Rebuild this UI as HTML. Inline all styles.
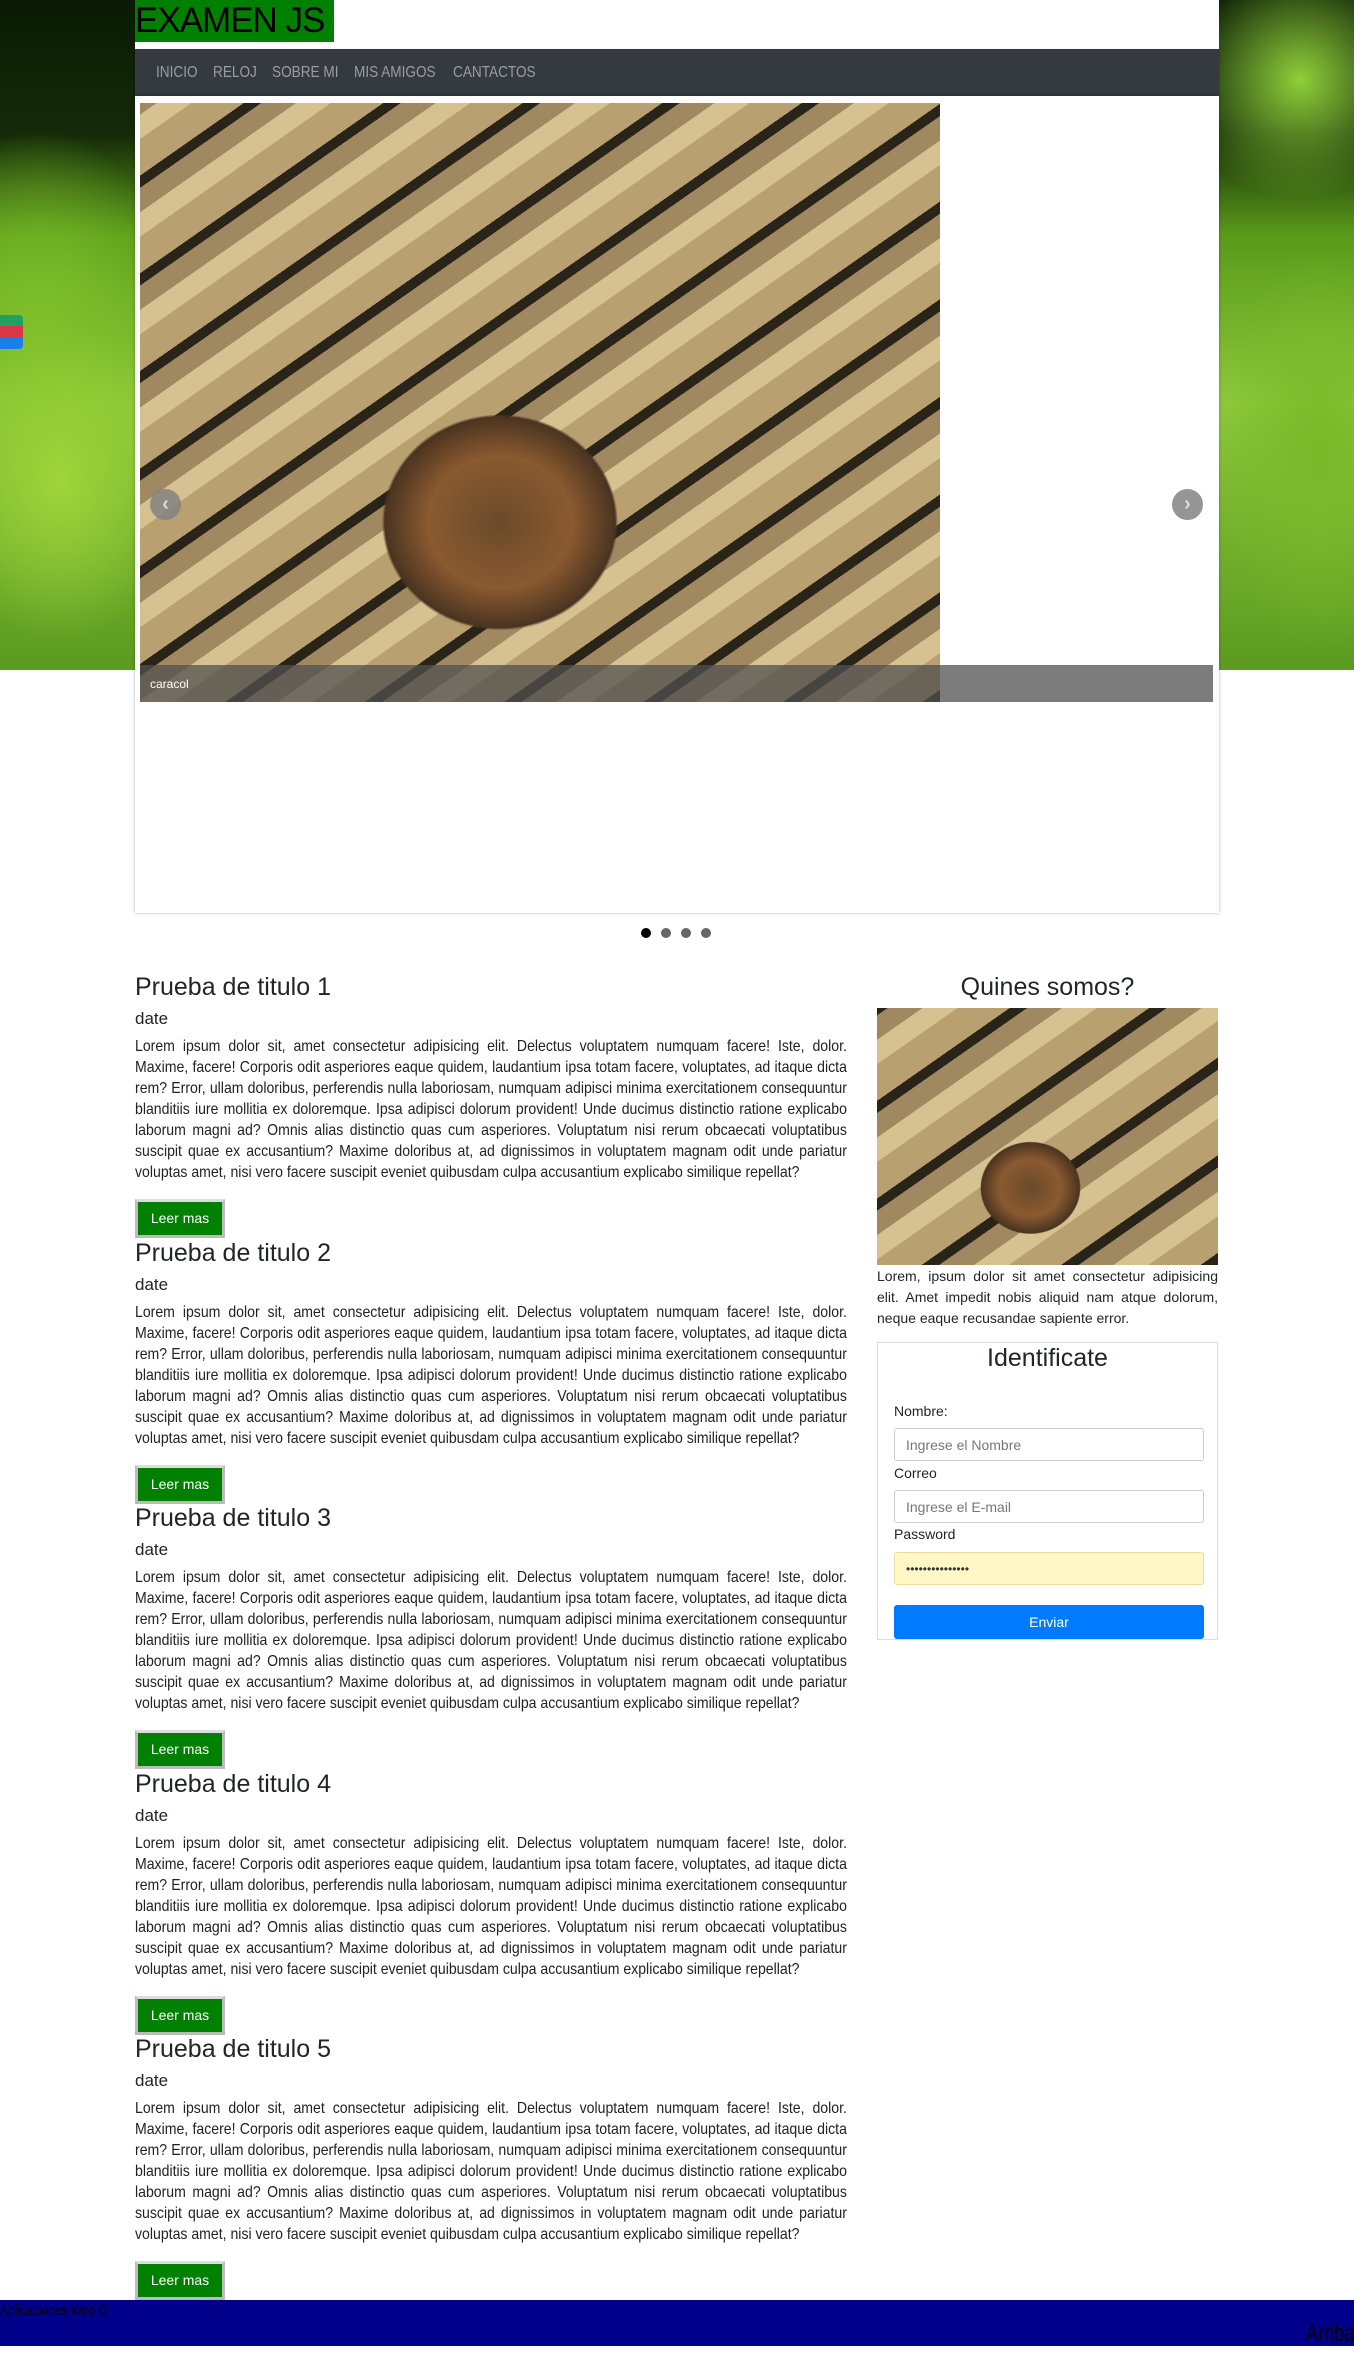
<!DOCTYPE html>
<html><head><meta charset="utf-8">
<style>
*{box-sizing:border-box;margin:0;padding:0}
body{width:1354px;height:2353px;position:relative;background:#fff;font-family:"Liberation Sans",sans-serif;color:#212529;overflow:hidden}
.bg{position:absolute;left:0;top:0;width:1354px;height:670px;background:
radial-gradient(ellipse 120px 160px at 60px 480px,#9fd43a,transparent),
radial-gradient(ellipse 140px 200px at 40px 330px,#7fc02a,transparent),
radial-gradient(ellipse 120px 120px at 1300px 80px,#8fcf3a,transparent),
radial-gradient(ellipse 100px 200px at 1320px 450px,#7ab82a,transparent),
linear-gradient(180deg,#0a1a05 0,#142a08 20%,#5a9a1a 35%,#8cc83a 60%,#5c9a20 100%)}
.mark{position:absolute;left:0;top:315px;width:23px;height:34px;border-radius:0 4px 4px 0;background:linear-gradient(#22a060 0 33%,#dc3545 33% 66%,#1a7fe8 66%)}
.title{position:absolute;left:135px;top:0;height:42px;width:199px;background:#008000;font-size:35px;line-height:42px;color:#000;letter-spacing:-1px}
.white{position:absolute;left:334px;top:0;width:885px;height:49px;background:#fff}
.whiteL{position:absolute;left:135px;top:42px;width:200px;height:7px;background:#fff}
nav{position:absolute;left:135px;top:49px;width:1084px;height:47px;background:#343a40;box-shadow:0 2px 3px rgba(0,0,0,.3)}
nav span{position:absolute;top:15px;font-size:16px;color:#9a9da0;transform:scaleX(.85);transform-origin:left}
.car{position:absolute;left:135px;top:96px;width:1084px;height:817px;background:#fff;box-shadow:0 0 3px rgba(0,0,0,.3)}
.snail{position:absolute;overflow:hidden;background:
radial-gradient(ellipse 18% 22% at 45% 70%,#6a4a2a 0,#8a5a30 50%,#4a3420 80%,transparent 82%),
repeating-linear-gradient(-35deg,#2a2418 0 10px,#b8a070 10px 40px,#d6c290 40px 60px,#a08860 60px 80px);}
.cap{position:absolute;left:140px;top:665px;width:1073px;height:37px;background:rgba(80,80,80,.75);color:#fff;font-size:12px;padding:12px 10px}
.arr{position:absolute;width:31px;height:31px;border-radius:50%;background:rgba(130,130,130,.85);color:#ddd;font-size:20px;text-align:center;line-height:30px;font-weight:bold}
.dot{position:absolute;top:928px;width:10px;height:10px;border-radius:50%;background:#666}
.art{position:absolute;left:135px;width:712px}
.art h2{font-size:25px;font-weight:normal;line-height:30px}
.art h4{font-size:17px;font-weight:normal;margin-top:6px;line-height:22px}
.art p{font-size:16px;line-height:21px;text-align:justify;margin-top:6px;color:#222;width:809px;transform:scaleX(.88);transform-origin:left top}
.btn{position:absolute;left:0;width:90px;height:39px;background:#008000;color:#fff;border:3px solid #bbb;border-top-color:#ddd;font-size:14px;text-align:center;line-height:33px}
.side{position:absolute;left:877px;width:341px}
.form{position:absolute;left:877px;top:1342px;width:341px;height:298px;border:1px solid #ddd}
.form label{position:absolute;left:16px;font-size:14px}
.form .in{position:absolute;left:16px;width:310px;height:33px;border:1px solid #ccc;border-radius:3px;font-size:14px;color:#777;padding:8px 11px}
footer{position:absolute;left:0;top:2300px;width:1354px;height:46px;background:#00008b}
</style></head><body>
<div class="bg"></div>
<div class="mark"></div>
<div class="white"></div><div class="whiteL"></div>
<div class="title">EXAMEN JS</div>
<nav><span style="left:21px">INICIO</span><span style="left:78px">RELOJ</span><span style="left:137px">SOBRE MI</span><span style="left:219px">MIS AMIGOS</span><span style="left:318px">CANTACTOS</span></nav>
<div class="car"></div>
<div class="snail" style="left:140px;top:103px;width:800px;height:599px"></div>
<div class="cap">caracol</div>
<div class="arr" style="left:150px;top:489px">‹</div>
<div class="arr" style="left:1172px;top:489px">›</div>
<div class="dot" style="left:641px;background:#000"></div><div class="dot" style="left:661px"></div><div class="dot" style="left:681px"></div><div class="dot" style="left:701px"></div>

<div class="art" style="top:972px"><h2>Prueba de titulo 1</h2><h4>date</h4><p>Lorem ipsum dolor sit, amet consectetur adipisicing elit. Delectus voluptatem numquam facere! Iste, dolor. Maxime, facere! Corporis odit asperiores eaque quidem, laudantium ipsa totam facere, voluptates, ad itaque dicta rem? Error, ullam doloribus, perferendis nulla laboriosam, numquam adipisci minima exercitationem consequuntur blanditiis iure mollitia ex doloremque. Ipsa adipisci dolorum provident! Unde ducimus distinctio ratione explicabo laborum magni ad? Omnis alias distinctio quas cum asperiores. Voluptatum nisi rerum obcaecati voluptatibus suscipit quae ex accusantium? Maxime doloribus at, ad dignissimos in voluptatem magnam odit unde pariatur voluptas amet, nisi vero facere suscipit eveniet quibusdam culpa accusantium explicabo similique repellat?</p><div class="btn" style="top:227px">Leer mas</div></div>
<div class="art" style="top:1238px"><h2>Prueba de titulo 2</h2><h4>date</h4><p>Lorem ipsum dolor sit, amet consectetur adipisicing elit. Delectus voluptatem numquam facere! Iste, dolor. Maxime, facere! Corporis odit asperiores eaque quidem, laudantium ipsa totam facere, voluptates, ad itaque dicta rem? Error, ullam doloribus, perferendis nulla laboriosam, numquam adipisci minima exercitationem consequuntur blanditiis iure mollitia ex doloremque. Ipsa adipisci dolorum provident! Unde ducimus distinctio ratione explicabo laborum magni ad? Omnis alias distinctio quas cum asperiores. Voluptatum nisi rerum obcaecati voluptatibus suscipit quae ex accusantium? Maxime doloribus at, ad dignissimos in voluptatem magnam odit unde pariatur voluptas amet, nisi vero facere suscipit eveniet quibusdam culpa accusantium explicabo similique repellat?</p><div class="btn" style="top:227px">Leer mas</div></div>
<div class="art" style="top:1503px"><h2>Prueba de titulo 3</h2><h4>date</h4><p>Lorem ipsum dolor sit, amet consectetur adipisicing elit. Delectus voluptatem numquam facere! Iste, dolor. Maxime, facere! Corporis odit asperiores eaque quidem, laudantium ipsa totam facere, voluptates, ad itaque dicta rem? Error, ullam doloribus, perferendis nulla laboriosam, numquam adipisci minima exercitationem consequuntur blanditiis iure mollitia ex doloremque. Ipsa adipisci dolorum provident! Unde ducimus distinctio ratione explicabo laborum magni ad? Omnis alias distinctio quas cum asperiores. Voluptatum nisi rerum obcaecati voluptatibus suscipit quae ex accusantium? Maxime doloribus at, ad dignissimos in voluptatem magnam odit unde pariatur voluptas amet, nisi vero facere suscipit eveniet quibusdam culpa accusantium explicabo similique repellat?</p><div class="btn" style="top:227px">Leer mas</div></div>
<div class="art" style="top:1769px"><h2>Prueba de titulo 4</h2><h4>date</h4><p>Lorem ipsum dolor sit, amet consectetur adipisicing elit. Delectus voluptatem numquam facere! Iste, dolor. Maxime, facere! Corporis odit asperiores eaque quidem, laudantium ipsa totam facere, voluptates, ad itaque dicta rem? Error, ullam doloribus, perferendis nulla laboriosam, numquam adipisci minima exercitationem consequuntur blanditiis iure mollitia ex doloremque. Ipsa adipisci dolorum provident! Unde ducimus distinctio ratione explicabo laborum magni ad? Omnis alias distinctio quas cum asperiores. Voluptatum nisi rerum obcaecati voluptatibus suscipit quae ex accusantium? Maxime doloribus at, ad dignissimos in voluptatem magnam odit unde pariatur voluptas amet, nisi vero facere suscipit eveniet quibusdam culpa accusantium explicabo similique repellat?</p><div class="btn" style="top:227px">Leer mas</div></div>
<div class="art" style="top:2034px"><h2>Prueba de titulo 5</h2><h4>date</h4><p>Lorem ipsum dolor sit, amet consectetur adipisicing elit. Delectus voluptatem numquam facere! Iste, dolor. Maxime, facere! Corporis odit asperiores eaque quidem, laudantium ipsa totam facere, voluptates, ad itaque dicta rem? Error, ullam doloribus, perferendis nulla laboriosam, numquam adipisci minima exercitationem consequuntur blanditiis iure mollitia ex doloremque. Ipsa adipisci dolorum provident! Unde ducimus distinctio ratione explicabo laborum magni ad? Omnis alias distinctio quas cum asperiores. Voluptatum nisi rerum obcaecati voluptatibus suscipit quae ex accusantium? Maxime doloribus at, ad dignissimos in voluptatem magnam odit unde pariatur voluptas amet, nisi vero facere suscipit eveniet quibusdam culpa accusantium explicabo similique repellat?</p><div class="btn" style="top:227px">Leer mas</div></div>

<div class="side" style="top:972px;text-align:center;font-size:25px;line-height:30px">Quines somos?</div>
<div class="snail" style="left:877px;top:1008px;width:341px;height:257px"></div>
<div class="side" style="top:1266px;font-size:14px;line-height:21px;text-align:justify">Lorem, ipsum dolor sit amet consectetur adipisicing elit. Amet impedit nobis aliquid nam atque dolorum, neque eaque recusandae sapiente error.</div>
<div class="form">
<div style="position:absolute;top:0;width:100%;text-align:center;font-size:25px;line-height:30px">Identificate</div>
<label style="top:60px">Nombre:</label>
<div class="in" style="top:85px">Ingrese el Nombre</div>
<label style="top:122px">Correo</label>
<div class="in" style="top:147px">Ingrese el E-mail</div>
<label style="top:183px">Password</label>
<div class="in" style="top:209px;background:#fff8c6;border-color:#eedc9a;color:#333;font-size:12px;padding-top:9px">•••••••••••••••</div>
<div style="position:absolute;left:16px;top:262px;width:310px;height:34px;background:#007bff;border-radius:3px;color:#fff;text-align:center;font-size:14px;line-height:34px">Enviar</div>
</div>
<footer><div style="position:absolute;left:0;top:2px;font-size:15px;color:#000;transform:scaleX(.8);transform-origin:left">Aplicaciones Web ©</div><div style="position:absolute;right:0;top:20px;font-size:24px;color:#000;transform:scaleX(.75);transform-origin:right">Arriba</div></footer>
</body></html>
